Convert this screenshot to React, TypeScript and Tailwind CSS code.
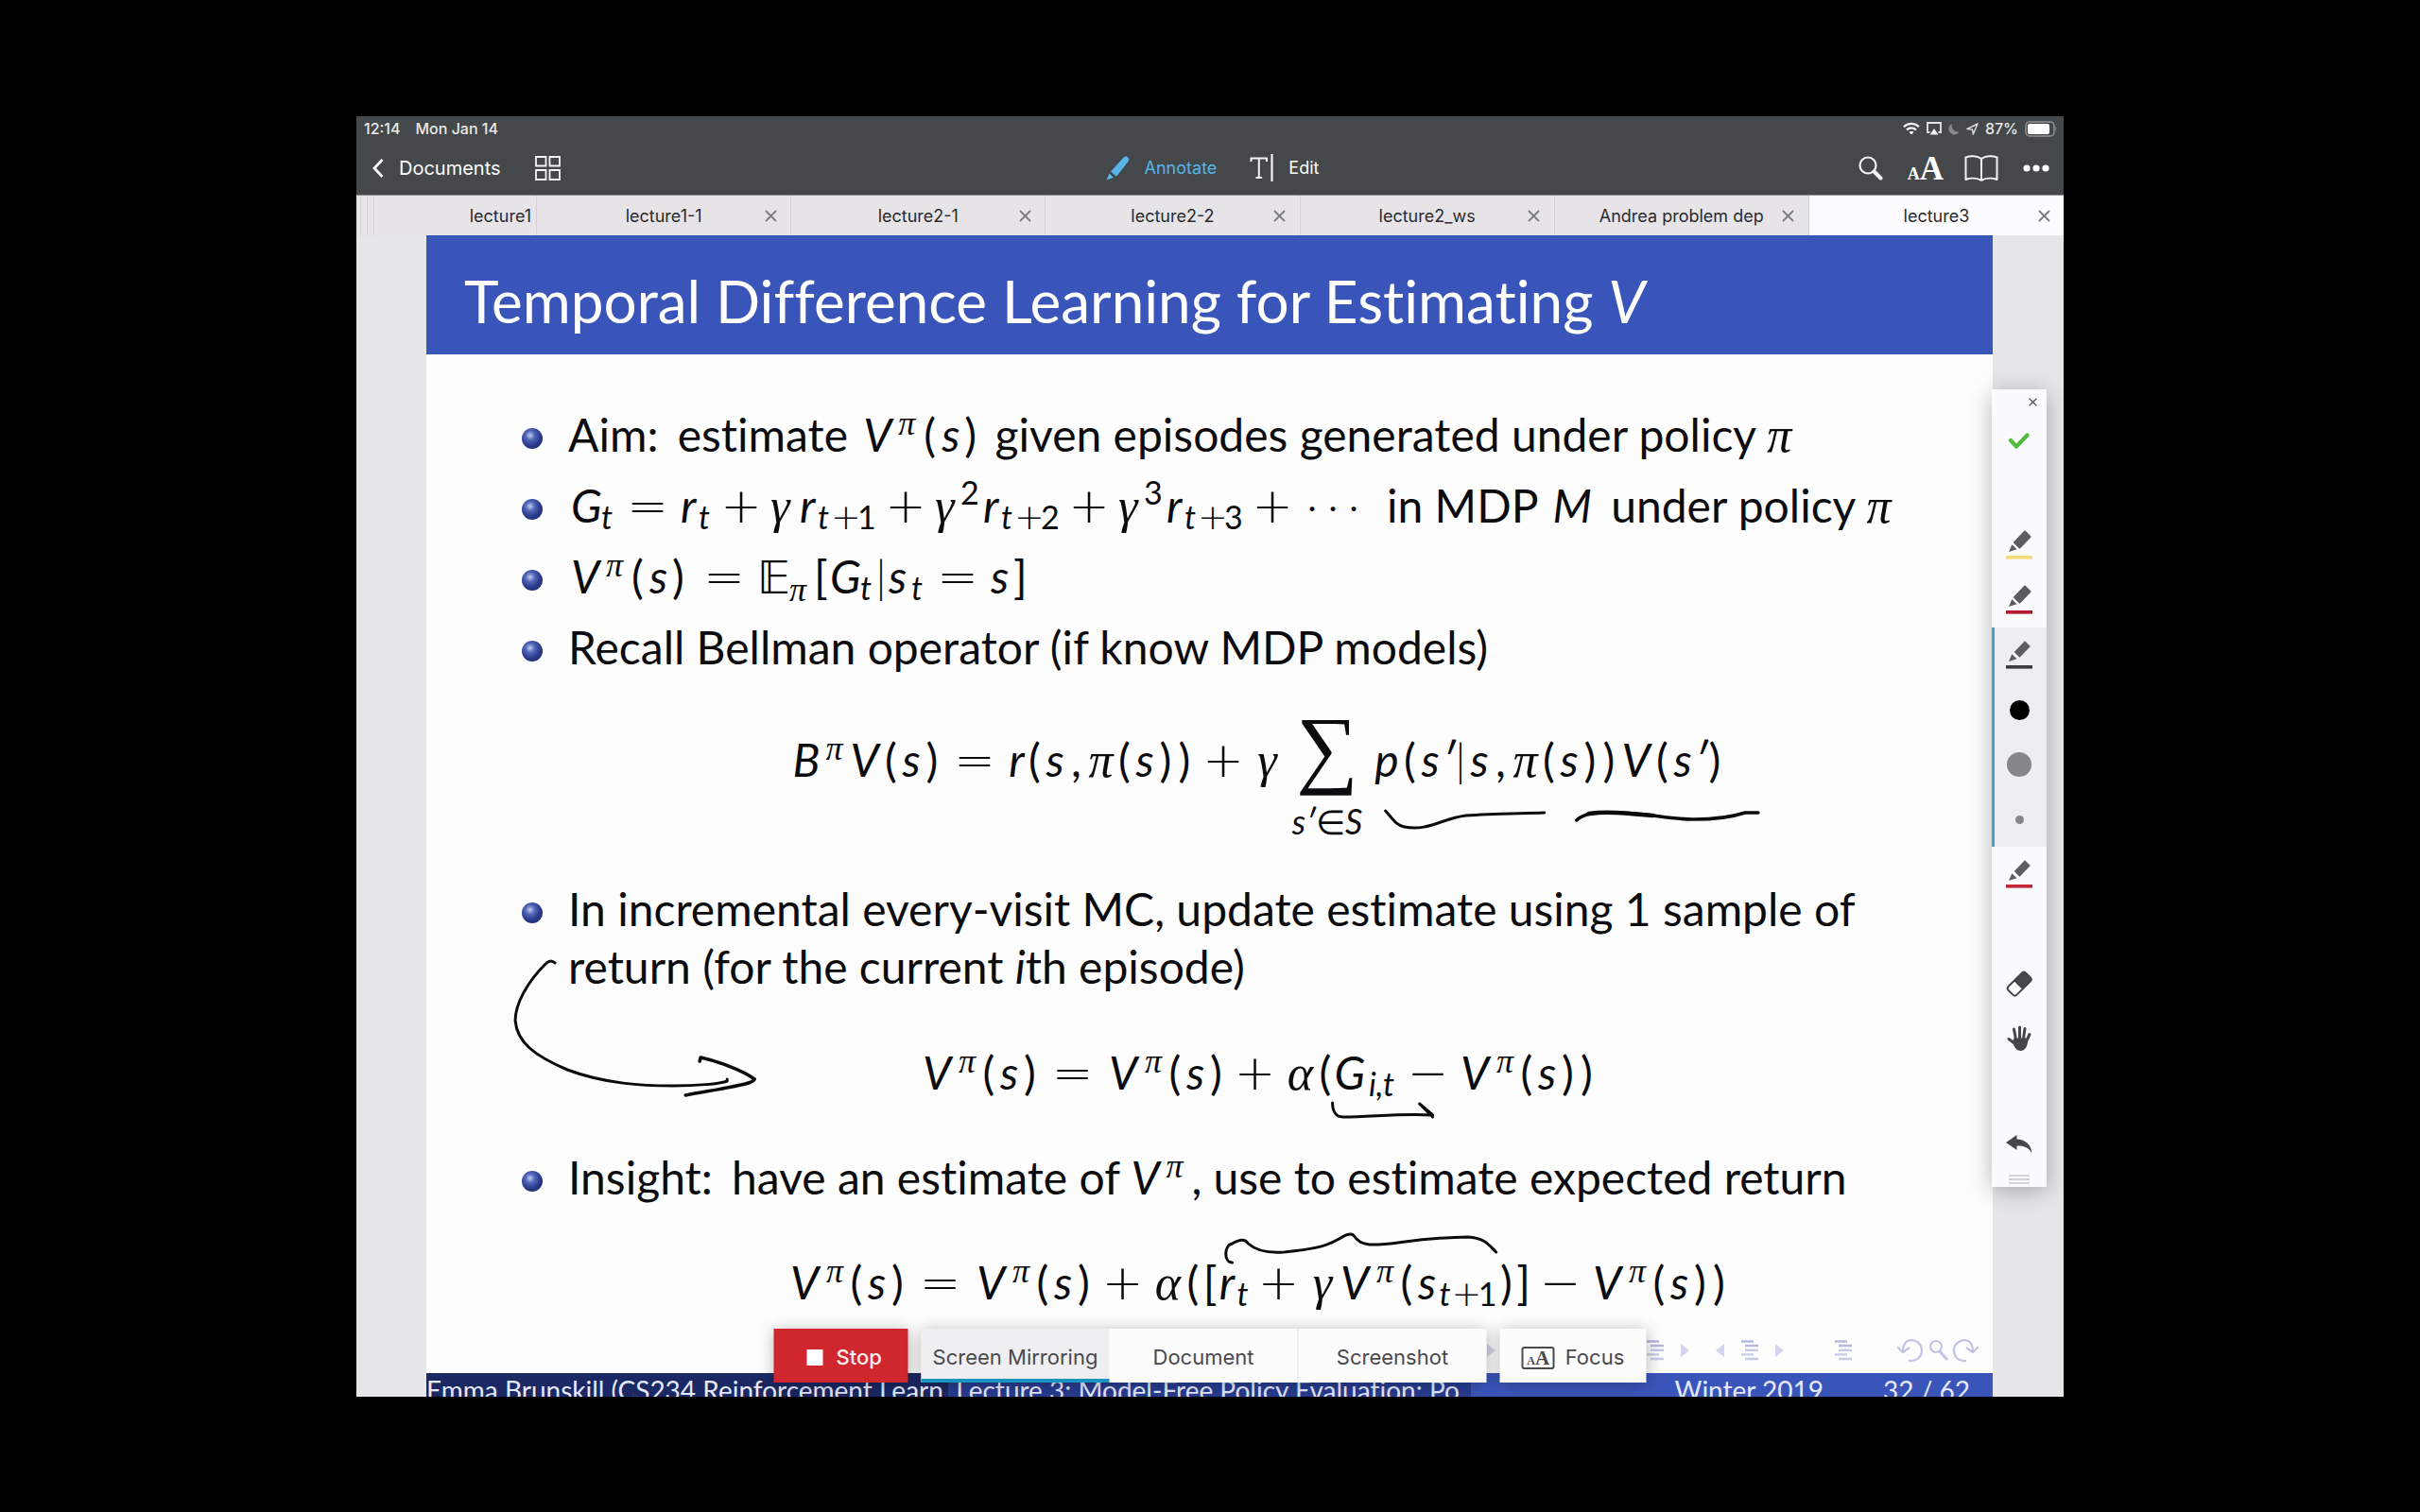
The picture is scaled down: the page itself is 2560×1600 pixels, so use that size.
import type { ReactNode } from 'react';

/* ---------- math atoms ---------- */
const GREEK = "inline-block leading-[0] italic font-['Liberation_Serif',serif]";
const OP = "inline-block leading-[0] text-center font-extralight font-['DejaVu_Sans',sans-serif]";
const IT = 'inline-block leading-[0] italic';

type Kids = { children?: ReactNode };
const V = () => <span className={`${IT} w-[37px]`}>V</span>;
const Cap = ({ children }: Kids) => <span className={`${IT} w-[32px]`}>{children}</span>;
const S = () => <span className={`${IT} w-[24px]`}>s</span>;
const R = () => <span className={`${IT} w-[19px]`}>r</span>;
const Open = () => <span className="inline-block w-[19px] leading-[0]">(</span>;
const Close = () => <span className="inline-block w-[20px] leading-[0]">)</span>;
const Bar = () => <span className="inline-block w-[16px] text-center leading-[0] font-light">|</span>;
const Comma = () => <span className="inline-block w-[21px] leading-[0]">,</span>;
const Dot = () => <span className="inline-block w-[22px] text-center leading-[0] font-light">·</span>;
const Prime = () => <span className={`${IT} w-[12px]`}>′</span>;
const Rel = ({ children }: Kids) => <span className={`${OP} w-[70px] text-[52px]`}>{children}</span>;
const Bin = ({ children }: Kids) => <span className={`${OP} w-[62px] text-[52px]`}>{children}</span>;
const Pi = () => <span className={`${GREEK} w-[31px] text-[52px]`}>π</span>;
const Gamma = () => <span className={`${GREEK} w-[31px] text-[52px]`}>γ</span>;
const Alpha = () => <span className={`${GREEK} w-[34px] text-[52px]`}>α</span>;
const SupPi = () => <span className={`${GREEK} w-[27px] align-[18px] text-[36px]`}>π</span>;
const SubPi = () => <span className={`${GREEK} w-[26px] align-[-8px] text-[36px]`}>π</span>;
const SupN = ({ children }: Kids) => (
  <span className="-ml-1 inline-block w-[24px] align-[19px] text-[34px] leading-[0]">{children}</span>
);
const SubT = () => <span className={`${IT} w-[14px] align-[-7px] text-[34px]`}>t</span>;
const SubPlus = ({ children }: Kids) => (
  <>
    <SubT />
    <span className={`${OP} w-[28px] align-[-7px] text-[38px]`}>+</span>
    <span className="inline-block w-[20px] align-[-7px] text-[34px] leading-[0]">{children}</span>
  </>
);
const OfS = () => (
  <>
    <Open />
    <S />
    <Close />
  </>
);
const VPi = () => (
  <>
    <V />
    <SupPi />
  </>
);

function Item({ children, tight = false }: { children: ReactNode; tight?: boolean }) {
  return (
    <li className="flex whitespace-nowrap">
      <span
        className={`mr-[27px] size-[22px] shrink-0 rounded-full bg-[radial-gradient(circle_at_40%_35%,#c3cdf3_0%,#5468b8_25%,#2a3a8c_55%,#1a2560_100%)] ${tight ? 'mt-[24px]' : 'mt-[31px]'}`}
      />
      <p className={tight ? 'leading-[61px]' : 'h-[75px] leading-[75px]'}>{children}</p>
    </li>
  );
}

/* ---------- icons ---------- */
function Pencil({ ink, round = false }: { ink: string; round?: boolean }) {
  return (
    <svg width="28" height="34" viewBox="0 0 28 34" className="block">
      <g fill="#5d5c5f">
        <path
          d="M9 14 L20 2.5 L25.5 8 L14.5 19.5 Z"
          stroke="#5d5c5f"
          strokeWidth={round ? 2 : 0.5}
          strokeLinejoin="round"
        />
        <path d="M3 24 L6.3 16.3 L11.5 21.3 Z" />
      </g>
      <rect x="0" y="28" width="28" height="3.6" fill={ink} />
    </svg>
  );
}

function Lines() {
  return (
    <svg width="18" height="22" viewBox="0 0 18 22">
      <g strokeWidth="2.4">
        <path d="M0 1.5h13M4 6h14" stroke="#b4bade" />
        <path d="M4 10.7h14M0 15.4h13M4 20h14" stroke="#c6cbe8" />
      </g>
    </svg>
  );
}
const TriR = () => (
  <svg width="9" height="14" viewBox="0 0 9 14"><path d="M0 0l9 7-9 7z" fill="#d3d5ec" /></svg>
);
const TriL = () => (
  <svg width="9" height="14" viewBox="0 0 9 14"><path d="M9 0L0 7l9 7z" fill="#d3d5ec" /></svg>
);
const Cross = ({ size }: { size: number }) => (
  <svg width={size} height={size} viewBox="0 0 13 13">
    <path d="M1 1l11 11M12 1L1 12" stroke="currentColor" strokeWidth="1.8" />
  </svg>
);

const TABS = [
  { name: 'lecture1-1' },
  { name: 'lecture2-1' },
  { name: 'lecture2-2' },
  { name: 'lecture2_ws' },
  { name: 'Andrea problem dep' },
  { name: 'lecture3', active: true },
];

function Header() {
  return (
    <header className="bg-[#44484b] text-white">
      <div className="flex h-[26px] items-center justify-between pr-[7px] pl-2 text-[16px] font-medium text-[#e8e9ea]">
        <div className="flex gap-4">
          <span>12:14</span>
          <span>Mon Jan 14</span>
        </div>
        <div className="flex items-center gap-[7px]">
          <svg width="18" height="14" viewBox="0 0 18 14" fill="none" stroke="#f2f2f2" strokeWidth="2.3">
            <path d="M1 5.2C5.5.8 12.5.8 17 5.2" />
            <path d="M4 8.4c3-2.6 7-2.6 10 0" />
            <path d="M6.5 10.8c1.5-1.3 3.5-1.3 5 0L9 13.6z" fill="#f2f2f2" stroke="none" />
          </svg>
          <svg width="16" height="14" viewBox="0 0 16 14">
            <path d="M3.5 11H1V1h14v10h-2.5" fill="none" stroke="#e4e5e6" strokeWidth="1.8" />
            <path d="M8 7l4.500 6.500h-9z" fill="#f2f2f2" />
          </svg>
          <svg width="12" height="13" viewBox="0 0 12 13">
            <path d="M4 1A6 6 0 1 0 11.800 9.200 6.500 6.500 0 0 1 4 1z" fill="#85888b" />
          </svg>
          <svg width="13" height="13" viewBox="0 0 13 13">
            <path d="M12 1L1 6.5l5.500.500L7.300 12z" fill="none" stroke="#d6d8d9" strokeWidth="1.5" strokeLinejoin="round" />
          </svg>
          <span>87%</span>
          <svg width="34" height="17" viewBox="0 0 34 17">
            <rect x="1" y="1" width="30" height="15" rx="4" fill="none" stroke="#8e9193" strokeWidth="1.5" />
            <rect x="3" y="3" width="23" height="11" rx="2" fill="#fff" />
            <path d="M32.500 5.500q1.600 3 0 6z" fill="#8e9193" />
          </svg>
        </div>
      </div>
      <div className="grid h-[57px] grid-cols-[1fr_auto_1fr] items-center pr-[15px] pl-[17px]">
        <div className="flex items-center gap-[36px]">
          <button className="flex items-center gap-[16px] text-[20px]">
            <svg width="12" height="20" viewBox="0 0 12 20">
              <path d="M10.5 1L2 10l8.500 9" fill="none" stroke="#fff" strokeWidth="2.8" />
            </svg>
            Documents
          </button>
          <button aria-label="Thumbnails">
            <svg width="27" height="26" viewBox="0 0 27 26" fill="none" stroke="#f4f4f4" strokeWidth="1.8">
              <path d="M1 1h10.500v9.500H1zM15.500 1H26v9.500H15.500zM1 15h10.500v10H1zM15.500 15H26v10H15.500z" />
            </svg>
          </button>
        </div>
        <div className="flex items-center gap-[35px] pl-[3px] text-[18px]">
          <button className="flex items-center gap-[15px] text-[#56b5e6]">
            <svg width="26" height="27" viewBox="0 0 26 27" fill="#56b5e6">
              <path d="M5.500 17.500L19.500 2.200a3 3 0 0 1 4 4L11 22.200z" stroke="#56b5e6" strokeWidth="1" />
              <path d="M0.500 26.500L3.500 19.500 8 24z" />
            </svg>
            Annotate
          </button>
          <button className="flex items-center gap-[16px]">
            <svg width="25" height="29" viewBox="0 0 25 29" fill="none" stroke="#f4f4f4" strokeWidth="2">
              <path d="M1.500 8V4.500H18V8M9.800 4.500V25M6.500 25h6.600" />
              <path d="M23.500 0v29" strokeWidth="2.2" />
            </svg>
            Edit
          </button>
        </div>
        <div className="flex items-center justify-end gap-[26px]">
          <button aria-label="Search">
            <svg width="26" height="26" viewBox="0 0 26 26" fill="none" stroke="#f4f4f4">
              <circle cx="10" cy="10" r="8.5" strokeWidth="2.2" />
              <path d="M16.500 16.500l7 7" strokeWidth="4" strokeLinecap="round" />
            </svg>
          </button>
          <button
            aria-label="Text size"
            className="flex h-[28px] items-baseline font-['Liberation_Serif',serif] leading-[28px] font-bold"
          >
            <span className="text-[18px]">A</span>
            <span className="text-[35px] leading-[30px]">A</span>
          </button>
          <button aria-label="Reader" className="-ml-1">
            <svg width="36" height="28" viewBox="0 0 36 28" fill="none" stroke="#f4f4f4" strokeWidth="2" strokeLinejoin="round">
              <path d="M18 4C13.500.600 6.500.600 1.500 2.500V26c5-1.800 12-1.800 16.500.800 4.500-2.600 11.500-2.600 16.500-.800V2.500C29.500.600 22.500.600 18 4zM18 4v22.500" />
            </svg>
          </button>
          <button aria-label="More">
            <svg width="28" height="8" viewBox="0 0 28 8" fill="#fff">
              <circle cx="4" cy="4" r="3.6" /><circle cx="14" cy="4" r="3.6" /><circle cx="24" cy="4" r="3.6" />
            </svg>
          </button>
        </div>
      </div>
    </header>
  );
}

function TabBar() {
  return (
    <nav className="grid h-[43px] grid-cols-[5px_7px_7px_172fr_repeat(6,269fr)] border-t border-[#8c8e90] bg-[#e6e4e7] text-[18px] text-[#2b2a2d]">
      <i className="border-r border-[#d3d3d6]" />
      <i className="border-r border-[#d3d3d6]" />
      <i className="border-r border-[#d3d3d6]" />
      <button className="border-r border-[#d3d3d6] pr-[5px] text-right">lecture1</button>
      {TABS.map((t) => (
        <div
          key={t.name}
          className={`grid grid-cols-[42px_1fr_42px] items-center ${t.active ? 'bg-[#fcfbfd]' : 'border-r border-[#d3d3d6]'}`}
        >
          <button className="col-start-2 whitespace-nowrap">{t.name}</button>
          <button aria-label={`Close ${t.name}`} className="flex justify-center text-[#7c7b7e]">
            <Cross size={13} />
          </button>
        </div>
      ))}
    </nav>
  );
}

function Ink() {
  return (
    <svg
      viewBox="451 249 1656 1229"
      preserveAspectRatio="none"
      className="pointer-events-none absolute inset-0 size-full"
      fill="none"
      stroke="#0b0b0d"
      strokeWidth="3"
      strokeLinecap="round"
      strokeLinejoin="round"
    >
      <path d="M587 1019 C584 1016 581 1016 577 1020 C558 1039 545 1062 545 1080 C547 1103 565 1117 600 1132 C640 1147 680 1149 712 1149 C735 1149 762 1147 769 1144 V1142" />
      <path d="M740 1123 L741 1119 C755 1122 785 1132 798 1142 C796 1147 780 1149 725 1159" strokeWidth="3.5" />
      <path d="M1465 858 C1473 867 1476 873 1485 875 C1510 880 1525 866 1550 863 C1575 861 1600 861 1633 860" />
      <path d="M1667 868 C1676 859 1690 860 1714 860 C1745 861 1765 867 1791 867 C1815 867 1830 865 1845 860 L1859 860" strokeWidth="3.5" />
      <path d="M1680 861 C1700 858 1725 861 1748 863" strokeWidth="4.5" />
      <path d="M1409 1167 C1409 1175 1412 1182 1420 1182 C1450 1182 1480 1178 1515 1180 L1501 1168 M1501 1168 L1515 1182" />
      <path d="M1303 1336 C1294 1336 1294 1318 1303 1316 C1310 1312 1316 1310 1320 1316 C1330 1325 1345 1326 1358 1325 C1385 1322 1400 1320 1414 1312 C1421 1308 1427 1304 1431 1307 C1436 1314 1440 1316 1448 1317 C1475 1318 1490 1310 1552 1309 C1570 1310 1574 1317 1582 1325" />
    </svg>
  );
}

function Slide() {
  return (
    <article className="relative mr-[75px] ml-[74px] flex flex-1 flex-col bg-[#fdfdfd] font-['Lato',sans-serif] text-[#0c0c0e] [font-variant-ligatures:none]">
      <h1 className="h-[126px] bg-[#3a55b9] pl-[40px] text-[62px] leading-[138px] whitespace-nowrap text-white">
        Temporal Difference Learning for Estimating <i>V</i>
      </h1>
      <ul className="pt-[47px] pr-[48px] pl-[101px] text-[48px]">
        <Item>
          Aim: <span className="pl-2">estimate</span>{' '}
          <span className="pl-1"><VPi /><OfS /></span> given episodes generated under policy <Pi />
        </Item>
        <Item>
          <span className="pl-[3px]" />
          <Cap>G</Cap><SubT /><Rel>=</Rel><R /><SubT /><Bin>+</Bin><Gamma /><R /><SubPlus>1</SubPlus><Bin>+</Bin>
          <Gamma /><SupN>2</SupN><R /><SubPlus>2</SubPlus><Bin>+</Bin>
          <Gamma /><SupN>3</SupN><R /><SubPlus>3</SubPlus><Bin>+</Bin>
          <Dot /><Dot /><Dot /><span className="pl-6">in MDP</span> <i className="px-1">M</i>{' '}
          <span className="pl-1">under policy</span> <Pi />
        </Item>
        <Item>
          <span className="pl-[3px]" />
          <VPi /><OfS /><Rel>=</Rel><span className="inline-block w-[34px] leading-[0]">𝔼</span><SubPi />
          <span className="inline-block w-[17px] leading-[0]">[</span><Cap>G</Cap><SubT /><Bar /><S /><SubT /><Rel>=</Rel><S />]
        </Item>
        <Item>Recall Bellman operator (if know MDP models)</Item>
        <li className="h-[209px] pt-[44px] pl-[49px] text-center leading-[75px] whitespace-nowrap">
          <Cap>B</Cap><SupPi /><V /><OfS /><Rel>=</Rel><R /><Open /><S /><Comma /><Pi /><OfS /><Close /><Bin>+</Bin><Gamma />
          <span className="mx-2 inline-flex w-[80px] flex-col text-center">
            <span className="font-['Liberation_Serif',serif] text-[92px] leading-[50px]">∑</span>
            <span className="mt-[28px] text-[36px] leading-[50px]"><i>s′</i>∈<i>S</i></span>
          </span>
          <span className={`${IT} w-[30px]`}>p</span><Open /><S /><Prime /><Bar /><S /><Comma /><Pi /><OfS /><Close /><V /><Open /><S /><Prime /><Close />
        </li>
        <Item tight>
          In incremental every-visit MC, update estimate using 1 sample of
          <br />
          return (for the current <i>i</i>th episode)
        </Item>
        <li className="mt-[44px] h-[111px] pl-[49px] text-center leading-[75px] whitespace-nowrap">
          <VPi /><OfS /><Rel>=</Rel><VPi /><OfS /><Bin>+</Bin><Alpha /><Open /><Cap>G</Cap>
          <span className={`${IT} w-[36px] align-[-7px] text-[34px]`}>i,t</span><Bin>−</Bin><VPi /><OfS /><Close />
        </li>
        <Item>
          Insight: <span className="pl-2">have</span> an estimate of <VPi />, use to estimate expected return
        </Item>
        <li className="mt-[36px] h-[75px] pl-[49px] text-center leading-[75px] whitespace-nowrap">
          <VPi /><OfS /><Rel>=</Rel><VPi /><OfS /><Bin>+</Bin><Alpha /><Open />
          <span className="inline-block w-[17px] leading-[0]">[</span><R /><SubT /><Bin>+</Bin><Gamma /><VPi /><Open /><S />
          <SubPlus>1</SubPlus><Close /><span className="inline-block w-[16px] leading-[0]">]</span><Bin>−</Bin><VPi /><OfS /><Close />
        </li>
      </ul>
      <div className="flex h-[59px] items-center justify-end gap-[18px] pt-[10px] pr-[15px]">
        <TriR />
        <span className="w-[124px]" />
        <Lines /><TriR />
        <span className="-mx-1" />
        <TriL /><Lines /><TriR />
        <span className="w-[18px]" />
        <Lines />
        <span className="w-2" />
        <svg width="86" height="26" viewBox="0 0 86 26" fill="none" stroke="#bfc4e4" strokeWidth="2.2" className="ml-1">
          <path d="M12 24c8 1 14-4 14-11S20 2 14 2C8 3 6 8 6 14M0 9l6 6 7-5" />
          <circle cx="41" cy="9" r="6" />
          <path d="M45 14l8 9" strokeWidth="3" />
          <path d="M73 24c-8 1-13-4-13-11S66 2 72 2c6 1 8 6 8 12M86 9l-6 6-7-5" />
        </svg>
      </div>
      <footer className="grid h-[25px] grid-cols-3 overflow-hidden text-[28px] leading-9 whitespace-nowrap text-[#e4e8fa]">
        <div className="bg-[#1a2863]">Emma Brunskill (CS234 Reinforcement Learn</div>
        <div className="bg-[#283c8f] pl-[8px]">Lecture 3: Model-Free Policy Evaluation: Po</div>
        <div className="flex justify-end gap-[63px] bg-[#3a55b9] pr-[24px]">
          <span>Winter 2019</span>
          <span>32 / 62</span>
        </div>
      </footer>
      <Ink />
    </article>
  );
}

function Palette() {
  const cell = 'flex h-[58px] w-full items-center justify-center';
  return (
    <aside className="absolute top-[289px] right-[18px] w-[58px] bg-[#fbfafc] shadow-[0_4px_24px_rgba(0,0,0,0.28)]">
      <button aria-label="Close palette" className="flex h-[26px] w-full items-center justify-end pr-[10px] text-[#55545a]">
        <Cross size={9} />
      </button>
      <button aria-label="Done" className={cell}>
        <svg width="24" height="18" viewBox="0 0 24 18">
          <path d="M3 8l6 6.500L20.500 2.500" fill="none" stroke="#52bd3c" strokeWidth="4.2" strokeLinecap="round" strokeLinejoin="round" />
        </svg>
      </button>
      <div className="h-[52px]" />
      <button aria-label="Yellow highlighter" className={cell}><Pencil ink="#f2dd7a" round /></button>
      <button aria-label="Red highlighter" className={cell}><Pencil ink="#b5172c" round /></button>
      <div className="border-l-[3px] border-[#4d9fc0] bg-[#eeedf0] pr-[3px]">
        <button aria-label="Black pen" className={cell}><Pencil ink="#3b3b40" /></button>
        <button aria-label="Black" className={cell}><span className="size-[21px] rounded-full bg-black" /></button>
        <button aria-label="Opacity" className={cell}><span className="size-[26px] rounded-full bg-[#868588]" /></button>
        <button aria-label="Thickness" className={cell}><span className="size-[9px] rounded-full bg-[#868588]" /></button>
      </div>
      <button aria-label="Red pen" className={cell}><Pencil ink="#c3253a" /></button>
      <div className="h-[58px]" />
      <button aria-label="Eraser" className={cell}>
        <svg width="28" height="28" viewBox="0 0 28 28">
          <g transform="rotate(-45 14 14)">
            <rect x="1" y="8" width="26" height="12.5" rx="3" fill="#fff" stroke="#47464a" strokeWidth="2" />
            <path d="M12 7.500h12.500a3 3 0 0 1 3 3v7.500a3 3 0 0 1-3 3H12z" fill="#47464a" />
          </g>
        </svg>
      </button>
      <button aria-label="Hand" className={cell}>
        <svg width="26" height="28" viewBox="0 0 26 28" fill="none" stroke="#47464a" strokeWidth="3" strokeLinecap="round">
          <path d="M9.500 15L7.500 4M13.500 14V2M17.500 14L19 3.500M20.500 17L24 9.500M8 19L2 14.500" />
          <path d="M7.500 13.500h13l1.500 3c0 5-2.500 10.500-7.500 10.500-4.500 0-6.500-3.500-8.500-9z" fill="#47464a" stroke="none" />
        </svg>
      </button>
      <div className="h-[58px]" />
      <button aria-label="Undo" className="flex h-[50px] w-full items-center justify-center">
        <svg width="28" height="20" viewBox="0 0 28 20" fill="#47464a">
          <path d="M0 8L11.500 0v4.500C20 5 26 9 27.500 19 23.500 13 19 11.500 11.500 11.500V16z" />
        </svg>
      </button>
      <div className="flex h-[20px] flex-col items-center justify-center gap-[2px] pt-1">
        <i className="h-[2px] w-[22px] bg-[#d4d3d6]" />
        <i className="h-[2px] w-[22px] bg-[#d4d3d6]" />
        <i className="h-[2px] w-[22px] bg-[#d4d3d6]" />
      </div>
    </aside>
  );
}

function MirrorBar() {
  const shadow = 'shadow-[0_2px_16px_rgba(0,0,0,0.28)]';
  return (
    <div className="absolute bottom-[15px] left-1/2 flex h-[57px] -translate-x-1/2 gap-[14px] text-[22px] text-[#4a494c]">
      <button className={`flex w-[142px] items-center gap-[14px] bg-[#d0262d] pt-1 pl-[35px] font-medium text-[#fdeeee] ${shadow}`}>
        <span className="size-[17px] bg-white" />
        Stop
      </button>
      <div className={`flex bg-[#fcfcfd] ${shadow}`}>
        <button className="w-[199px] border-b-4 border-[#1b93c0] bg-[#efeef0] pt-2 whitespace-nowrap">Screen Mirroring</button>
        <button className="w-[200px] border-r border-[#e2e1e4] pt-1">Document</button>
        <button className="w-[199px] pt-1">Screenshot</button>
      </div>
      <button className={`flex w-[155px] items-center justify-center gap-[11px] bg-[#fcfcfd] pt-1 ${shadow}`}>
        <span className="flex h-[24px] w-[35px] items-baseline justify-center rounded-[3px] border-2 border-[#4a494c] font-['Liberation_Serif',serif] leading-[20px] font-bold">
          <span className="text-[12px]">A</span>
          <span className="text-[21px] leading-[20px]">A</span>
        </span>
        Focus
      </button>
    </div>
  );
}

export default function App() {
  return (
    <main className="min-h-screen bg-black px-[377px] pt-[123px] pb-[122px] font-['Inter',sans-serif]">
      <section className="relative flex flex-col overflow-hidden bg-[#e6e5e8]">
        <Header />
        <TabBar />
        <Slide />
        <Palette />
        <MirrorBar />
      </section>
    </main>
  );
}
